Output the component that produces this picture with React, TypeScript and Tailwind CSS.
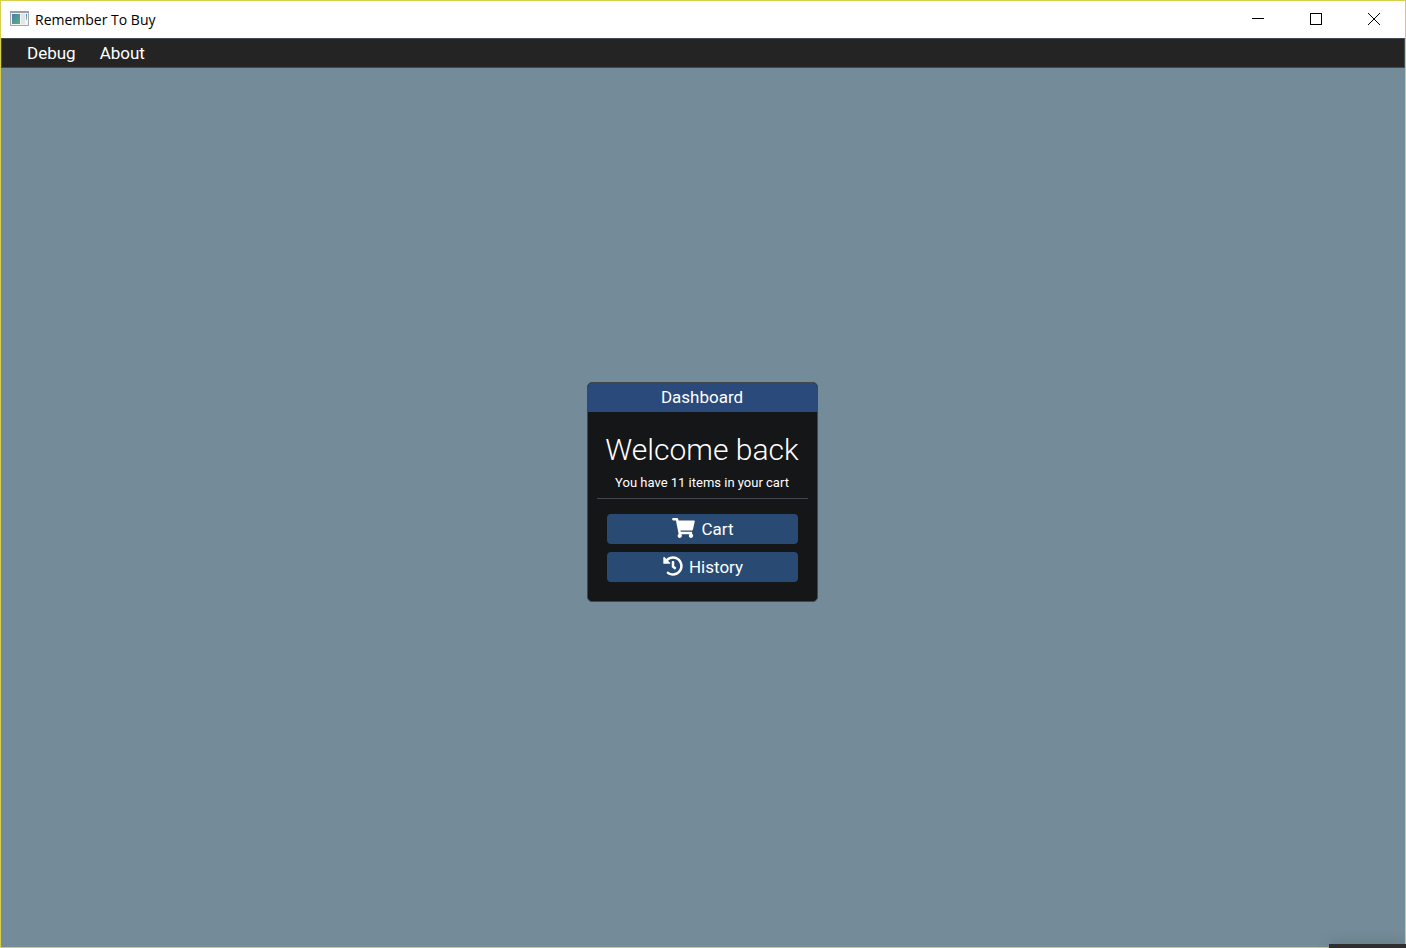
import type { ReactNode } from "react";
import { FaHistory, FaShoppingCart } from "react-icons/fa";

function AppIcon() {
  return (
    <svg width="19" height="16" viewBox="0 0 19 16" aria-hidden="true">
      <defs>
        <linearGradient id="pane" x1="0" y1="0" x2="1" y2="1">
          <stop offset="0" stopColor="#4a7fb0" />
          <stop offset="1" stopColor="#58b07c" />
        </linearGradient>
        <linearGradient id="bar" x1="0" y1="0" x2="0" y2="1">
          <stop offset="0" stopColor="#4a80c0" />
          <stop offset="1" stopColor="#8ccb9c" />
        </linearGradient>
      </defs>
      <rect x="0.5" y="0.5" width="18" height="14" fill="#f3f3f4" stroke="#a3a8ad" />
      <path d="M0 1h19" stroke="#9ba0a6" strokeWidth="2" />
      <rect x="2" y="3" width="8" height="10" fill="url(#pane)" />
      <rect x="11" y="3" width="4" height="10" fill="#e2e4e8" />
      <rect x="16" y="3" width="1" height="6" fill="url(#bar)" />
    </svg>
  );
}

function WindowButton({ label, children }: { label: string; children: ReactNode }) {
  return (
    <button type="button" aria-label={label} className="flex h-full w-[58px] items-center justify-center">
      <svg width="12" height="12" viewBox="0 0 12 12" fill="none" stroke="#000">
        {children}
      </svg>
    </button>
  );
}

function ActionButton({ icon, children }: { icon: ReactNode; children: ReactNode }) {
  return (
    <button
      type="button"
      className="flex h-[30px] w-full items-center justify-center gap-1.5 rounded-[4px] bg-[#294a73] pt-0.5 pl-0.5 text-[17px] text-white"
    >
      <span className="pb-1">{icon}</span>
      {children}
    </button>
  );
}

export default function App() {
  return (
    <div className="relative flex min-h-screen flex-col border border-[#d8cf4a] bg-[#748c99] font-['Roboto',sans-serif] text-white">
      <header className="flex h-[37px] items-center justify-between bg-white pb-px text-black">
        <div className="flex items-center gap-1.5 pl-[9px]">
          <AppIcon />
          <h1 className="font-['Open_Sans',sans-serif] text-[14px]">Remember To Buy</h1>
        </div>
        <div className="flex h-full pr-0.5">
          <WindowButton label="Minimize">
            <path d="M0 5.5h12" />
          </WindowButton>
          <WindowButton label="Maximize">
            <rect x="0.5" y="0.5" width="11" height="11" />
          </WindowButton>
          <WindowButton label="Close">
            <path d="M0 0l12 12M12 0l-12 12" />
          </WindowButton>
        </div>
      </header>

      <nav className="flex h-[30px] items-center gap-6 border border-[#434a50] bg-[#242424] pt-0.5 pl-[25px] text-[17px]">
        <button type="button">Debug</button>
        <button type="button">About</button>
      </nav>

      <main className="flex grow items-center justify-center pr-0.5 pb-8">
        <section className="w-[231px] overflow-hidden rounded-[5px] border border-[#42464d] bg-[#151618]">
          <h2 className="flex h-[29px] items-center justify-center bg-[#294a7a] pt-0.5 text-[17px]">Dashboard</h2>
          <div className="px-[9px] pt-5 pb-[19px] text-center">
            <p className="text-[30px] leading-9 font-light whitespace-nowrap">Welcome back</p>
            <p className="pt-[5px] text-[13px] leading-5">You have 11 items in your cart</p>
            <hr className="mt-[5px] border-[#42464d]" />
            <div className="flex flex-col gap-2 px-2.5 pt-[15px]">
              <ActionButton icon={<FaShoppingCart className="h-5 w-[23px]" />}>Cart</ActionButton>
              <ActionButton icon={<FaHistory className="h-5 w-5" />}>History</ActionButton>
            </div>
          </div>
        </section>
      </main>

      <div className="absolute -right-px -bottom-px h-1 w-[77px] bg-[#302d30] shadow-[0_0_14px_rgba(0,0,0,0.3)]" />
    </div>
  );
}
